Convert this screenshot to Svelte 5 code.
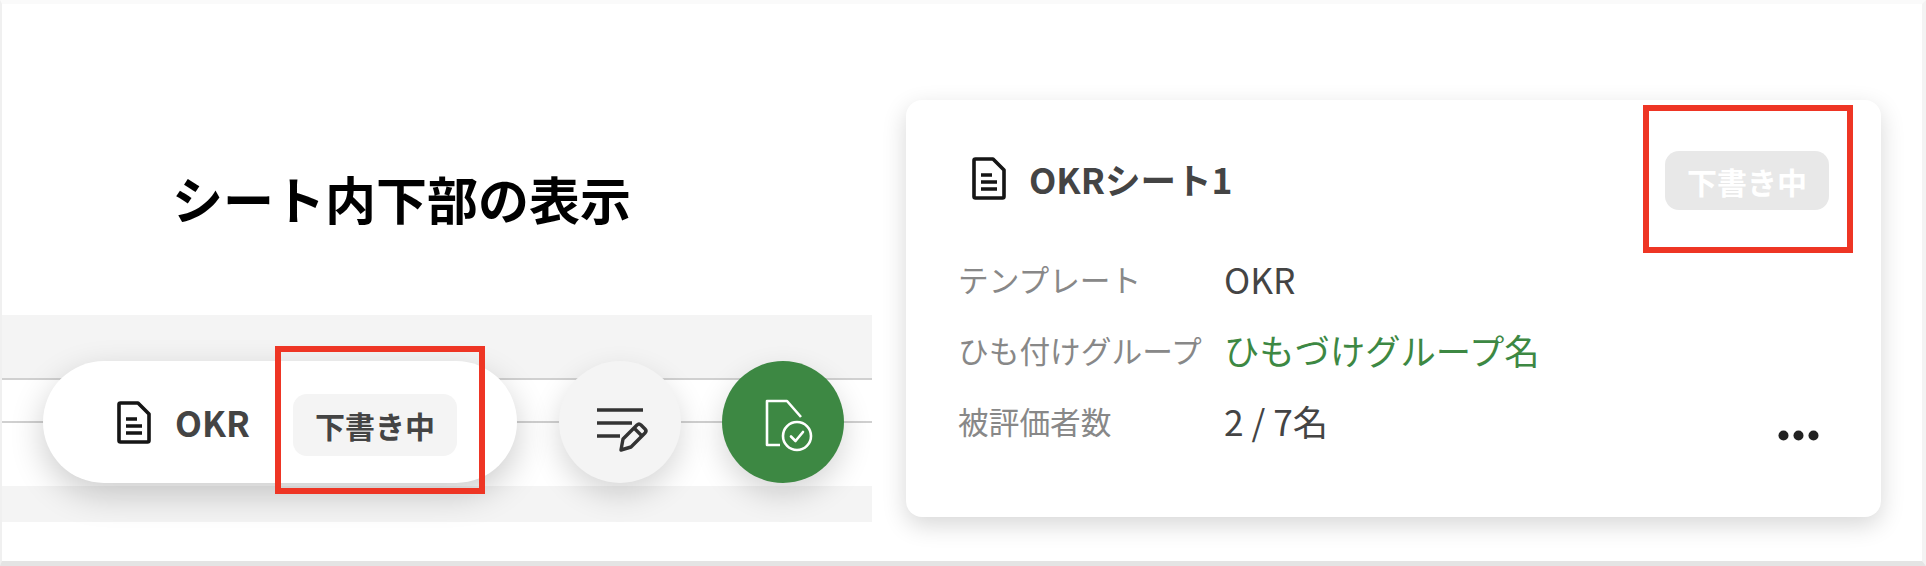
<script lang="ts">
  const rows = [
    { label: "テンプレート", value: "OKR" },
    { label: "ひも付けグループ", value: "ひもづけグループ名", link: true },
    { label: "被評価者数", value: "2 / 7名", more: true }
  ];
</script>

{#snippet docIcon()}
  <svg class="doc" viewBox="0 0 34 43" fill="none" stroke="#151515" stroke-width="3.600" stroke-linejoin="round">
    <path d="M2 3.500 Q2 2 3.500 2 H21 L32 13 V39.500 Q32 41 30.500 41 H3.500 Q2 41 2 39.500 Z" />
    <path d="M9 18 H20 M9 25 H25 M9 32 H25" />
  </svg>
{/snippet}

<div class="frame">
  <section class="left">
    <h1>シート内下部の表示</h1>
    <div class="band">
      <div class="strip">
        <div class="pill">
          {@render docIcon()}
          <span class="pill-name">OKR</span>
          <span class="pill-chip">下書き中</span>
        </div>
        <button class="round edit" aria-label="編集">
          <svg viewBox="0 0 122 122" fill="none" stroke="#333" stroke-width="3.400">
            <path d="M38 49 H84 M38 62 H73 M38 75 H61" />
            <path d="M64 78 L78 64 Q80 62 82 64 L86 68 Q88 70 86 72 L72 86 L62 89 Z" stroke-linejoin="round" />
            <path d="M75 67 L83 75" />
          </svg>
        </button>
        <button class="round submit" aria-label="提出">
          <svg viewBox="0 0 122 122" fill="none" stroke="#fff" stroke-width="2.600" stroke-linejoin="round">
            <path d="M58 84 H45 V40 H65 L79 56" />
            <circle cx="75" cy="75" r="14" />
            <path d="M69 75.500 L73.500 80 L81 71" stroke-linecap="round" />
          </svg>
        </button>
      </div>
      <div class="mark mark-left"></div>
    </div>
  </section>

  <section class="right">
    <div class="card">
      <header class="card-head">
        <div class="card-title">
          {@render docIcon()}
          <span>OKRシート1</span>
        </div>
        <span class="card-chip">下書き中</span>
      </header>
      {#each rows as row}
        <div class="row">
          <span class="label">{row.label}</span>
          <span class="value" class:link={row.link}>{row.value}</span>
          {#if row.more}
            <svg class="dots" viewBox="0 0 41 11" fill="#222">
              <circle cx="5.500" cy="5.500" r="5" />
              <circle cx="20.500" cy="5.500" r="5" />
              <circle cx="35.500" cy="5.500" r="5" />
            </svg>
          {/if}
        </div>
      {/each}
      <div class="mark mark-right"></div>
    </div>
  </section>
</div>

<style>
  :global(body) {
    margin: 0;
    background: #fff;
  }

  .frame {
    box-sizing: border-box;
    width: 1926px;
    height: 566px;
    display: flex;
    background: #fff;
    border-style: solid;
    border-width: 4px 4px 5px 2px;
    border-color: #fafafa #f3f3f3 #e4e4e4 #f0f0f0;
    font-family: "Noto Sans CJK JP", "Noto Sans", sans-serif;
    color: #444;
  }

  .left {
    width: 870px;
    flex: none;
  }

  h1 {
    margin: 0;
    padding: 162px 0 0 170px;
    height: 311px;
    box-sizing: border-box;
    font-size: 51px;
    line-height: 64px;
    font-weight: 700;
    color: #000;
    white-space: nowrap;
  }

  .band {
    position: relative;
    height: 207px;
    padding-top: 63px;
    box-sizing: border-box;
    background: #f4f4f4;
  }

  .strip {
    position: relative;
    height: 108px;
    box-sizing: border-box;
    display: flex;
    align-items: flex-start;
    gap: 42px;
    padding-left: 41px;
    background: #fff;
    border-top: 2px solid #d0d0d0;
  }

  .strip::before {
    content: "";
    position: absolute;
    left: 0;
    right: 0;
    top: 41px;
    height: 2px;
    background: #d0d0d0;
  }

  .pill {
    position: relative;
    flex: none;
    width: 474px;
    height: 122px;
    margin-top: -19px;
    box-sizing: border-box;
    padding-left: 74px;
    display: flex;
    align-items: center;
    border-radius: 61px;
    background: #fff;
    box-shadow: 0 12px 34px rgba(0, 0, 0, 0.2);
  }

  .doc {
    width: 34px;
    height: 43px;
    flex: none;
  }

  .pill-name {
    width: 118px;
    margin-left: 24px;
    font-size: 35px;
    font-weight: 700;
    line-height: 44px;
  }

  .pill-chip {
    width: 164px;
    height: 62px;
    margin-top: 6px;
    display: flex;
    align-items: center;
    justify-content: center;
    border-radius: 14px;
    background: #f4f4f4;
    font-size: 30px;
    font-weight: 700;
  }

  .round {
    position: relative;
    flex: none;
    width: 122px;
    height: 122px;
    margin-top: -19px;
    padding: 0;
    border: 0;
    border-radius: 50%;
    box-shadow: 0 12px 30px rgba(0, 0, 0, 0.16);
  }

  .round svg {
    display: block;
    width: 122px;
    height: 122px;
  }

  .edit {
    background: #f4f4f4;
  }

  .submit {
    margin-left: -1px;
    background: #3d8843;
  }

  .right {
    flex: 1;
    padding: 96px 0 0 34px;
  }

  .card {
    position: relative;
    box-sizing: border-box;
    width: 975px;
    height: 417px;
    padding: 0 52px 0 52px;
    border-radius: 16px;
    background: #fff;
    box-shadow: 0 8px 24px rgba(0, 0, 0, 0.16);
  }

  .card-head {
    height: 143px;
    display: flex;
    align-items: flex-start;
    justify-content: space-between;
  }

  .card-title {
    display: flex;
    align-items: center;
    gap: 23px;
    height: 44px;
    margin: 56px 0 0 14px;
    font-size: 35.500px;
    font-weight: 700;
  }

  .card-chip {
    width: 164px;
    height: 59px;
    margin-top: 51px;
    display: flex;
    align-items: center;
    justify-content: center;
    border-radius: 14px;
    background: #e8e8e8;
    color: #fff;
    font-size: 30px;
    font-weight: 700;
  }

  .row {
    display: flex;
    align-items: center;
    height: 71px;
  }

  .label {
    width: 266px;
    flex: none;
    font-size: 30.700px;
    color: #888;
    white-space: nowrap;
  }

  .value {
    font-size: 35.300px;
    white-space: nowrap;
  }

  .value.link {
    color: #3d8843;
  }

  .dots {
    width: 41px;
    height: 11px;
    margin: 30px 10px 0 auto;
  }

  .mark {
    position: absolute;
    box-sizing: border-box;
    border: 6px solid #ee3524;
    pointer-events: none;
  }

  .mark-left {
    left: 273px;
    top: 31px;
    width: 210px;
    height: 148px;
  }

  .mark-right {
    right: 28px;
    top: 5px;
    width: 210px;
    height: 148px;
  }
</style>
